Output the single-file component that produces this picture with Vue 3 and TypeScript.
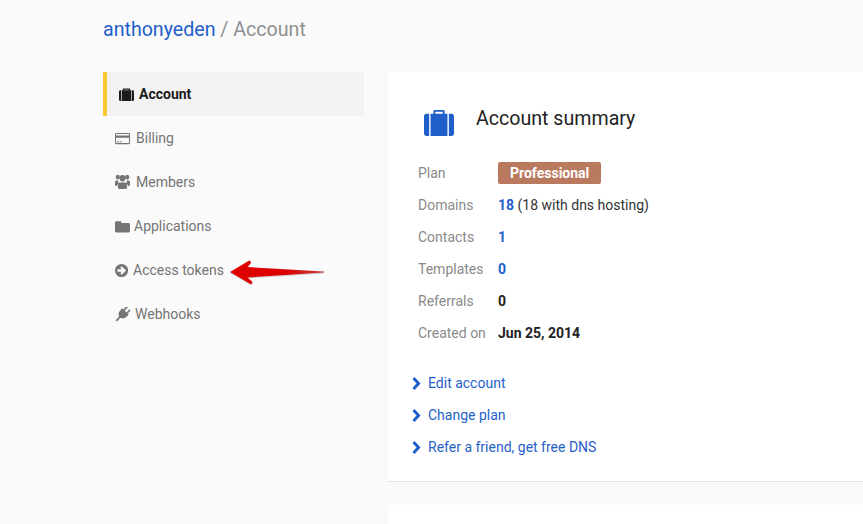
<script setup lang="ts">
interface NavItem { label: string; icon: string; gap: number; active?: boolean }
const nav: NavItem[] = [
  { label: 'Account', icon: 'case', gap: 5, active: true },
  { label: 'Billing', icon: 'card', gap: 6 },
  { label: 'Members', icon: 'users', gap: 6 },
  { label: 'Applications', icon: 'folder', gap: 4 },
  { label: 'Access tokens', icon: 'circle', gap: 3 },
  { label: 'Webhooks', icon: 'plug', gap: 5 },
]
const links = ['Edit account', 'Change plan', 'Refer a friend, get free DNS']
</script>

<template>
  <div class="page">
    <h1 class="crumb"><a class="blue">anthonyeden</a> / Account</h1>
    <div class="columns">
      <nav class="side">
        <a v-for="item in nav" :key="item.label" class="nav" :class="{ active: item.active }">
          <svg class="ico" viewBox="0 0 16 16" fill="currentColor">
            <template v-if="item.icon === 'case'">
              <path d="M5 1.500h6a1 1 0 0 1 1 1V4h-1.500V3H5.500v1H4V2.500a1 1 0 0 1 1-1z" />
              <path d="M3.200 3.500h9.600V15H3.200zM0 5a1.500 1.500 0 0 1 1.500-1.500h1V15h-1A1.500 1.500 0 0 1 0 13.500zM13.500 3.500h1A1.500 1.500 0 0 1 16 5v8.500a1.500 1.500 0 0 1-1.500 1.500h-1z" />
            </template>
            <path v-else-if="item.icon === 'card'" fill-rule="evenodd" d="M1.200 2h13.600A1.200 1.200 0 0 1 16 3.200v9.600a1.200 1.200 0 0 1-1.200 1.200H1.200A1.200 1.200 0 0 1 0 12.800V3.200A1.200 1.200 0 0 1 1.200 2zM1.100 3.100v1.700h13.800V3.100zm0 4v5.800h13.800V7.100zM2.200 11h2.200v.9H2.200zm3.300 0h1.700v.9H5.500z" />
            <g v-else-if="item.icon === 'users'" transform="translate(0 -1.500) scale(1 1.150)">
              <circle cx="3" cy="3.300" r="2.200" /><circle cx="13" cy="3.300" r="2.200" /><circle cx="8" cy="4.300" r="3" />
              <path d="M0 7.800C0 7 .6 6.300 1.500 6.300h2c-.3 1-.1 2 .5 2.800-1 .4-1.700 1.100-2 2.500C.8 11.600 0 11 0 10zM16 7.800c0-.8-.6-1.500-1.500-1.500h-2c.3 1 .1 2-.5 2.800 1 .4 1.700 1.100 2 2.500 1.200 0 2-.6 2-1.600zM5.500 8.300h5C12.300 8.300 13 10 13 12c0 1.500-.9 2.400-2 2.400H5c-1.100 0-2-.9-2-2.400 0-2 .7-3.700 2.500-3.700z" />
            </g>
            <path v-else-if="item.icon === 'folder'" d="M1.500 2.500h4c.8 0 1.300.5 1.300 1.300v.4h7.700c.9 0 1.500.6 1.500 1.500v7.100c0 .9-.6 1.500-1.500 1.500h-13C.6 14.300 0 13.700 0 12.800V4C0 3.100.6 2.500 1.500 2.500z" />
            <path v-else-if="item.icon === 'circle'" fill-rule="evenodd" d="M7 1a7 7 0 1 1 0 14A7 7 0 0 1 7 1zM7.200 3.400 5.600 5 7.200 6.700H2.600v2.600h4.600L5.600 11 7.200 12.600 11.800 8z" />
            <g v-else transform="rotate(45 8 8)">
              <path d="M4.800-1.500h1.900v5H4.800zM9.300-1.500h1.900v5H9.300zM3.200 3.500h9.600v3.200c0 2.800-1.800 4.800-3.800 5.300V17.500H7V12c-2-.5-3.800-2.500-3.800-5.300z" />
            </g>
          </svg>
          <span :style="{ marginLeft: item.gap + 'px' }">{{ item.label }}</span>
        </a>
      </nav>
      <main class="main">
        <section class="card">
          <header class="head">
            <svg class="big" viewBox="0 0 32 28" preserveAspectRatio="none" fill="#1f5fc9">
              <path d="M10 1.500C10 .7 10.700 0 11.500 0h9c.8 0 1.500.7 1.500 1.500V5h-2V2h-8v3h-2z" />
              <path d="M7 4h18v24H7zM0 7a3 3 0 0 1 3-3h2.500v24H3a3 3 0 0 1-3-3zM26.500 4H29a3 3 0 0 1 3 3v18a3 3 0 0 1-3 3h-2.500z" />
            </svg>
            <h2>Account summary</h2>
          </header>
          <dl class="facts">
            <dt>Plan</dt><dd><span class="badge">Professional</span></dd>
            <dt>Domains</dt><dd><b class="blue">18</b> (18 with dns hosting)</dd>
            <dt>Contacts</dt><dd><b class="blue">1</b></dd>
            <dt>Templates</dt><dd><b class="blue">0</b></dd>
            <dt>Referrals</dt><dd><b>0</b></dd>
            <dt>Created on</dt><dd><b>Jun 25, 2014</b></dd>
          </dl>
          <ul class="links">
            <li v-for="l in links" :key="l">
              <svg class="chev" viewBox="0 0 9 13" fill="none" stroke="#1f5fc9" stroke-width="3"><path d="M1.500 1l5 5.500-5 5.500" /></svg>
              <a class="blue">{{ l }}</a>
            </li>
          </ul>
        </section>
        <section class="card second"></section>
      </main>
    </div>
    <svg class="arrow" width="100" height="30" viewBox="0 0 100 30">
      <defs>
        <linearGradient id="arrowFill" x1="0" x2="1" y1="0" y2="0">
          <stop offset="0" stop-color="#e00000" />
          <stop offset="0.6" stop-color="#dc0000" />
          <stop offset="1" stop-color="#c84040" />
        </linearGradient>
      </defs>
      <path d="M5 14 23.500 3c1.500-.9 3 .5 2.300 2L22.500 9 99 13.500 99 14.500 22.500 19.500 27 23.500c1.300 1.500-.3 3-2 2.300z" fill="#777" opacity=".35" transform="translate(0 1)" />
      <path d="M5 14 23.500 3c1.500-.9 3 .5 2.300 2L22.500 9 99 13.500 99 14.500 22.500 19.500 27 23.500c1.300 1.500-.3 3-2 2.300z" fill="url(#arrowFill)" />
    </svg>
  </div>
</template>

<style>
html, body { margin: 0; background: #fafafa; }
</style>

<style scoped>
.page {
  position: relative;
  box-sizing: border-box;
  height: 524px;
  overflow: hidden;
  padding-left: 103px;
  background: #fafafa;
  font-family: Roboto, "Liberation Sans", sans-serif;
  font-size: 14px;
  color: #222;
}
.blue { color: #1f5fc9; }
.crumb {
  margin: 0;
  height: 72px;
  padding-top: 17px;
  box-sizing: border-box;
  font-size: 19.6px;
  line-height: 26px;
  font-weight: 400;
  color: #8f8f8f;
}
.columns { display: flex; gap: 24px; }
.side { width: 261px; flex: none; }
.nav {
  display: flex;
  align-items: center;
  height: 44px;
  padding-left: 12px;
  color: #757575;
}
.nav.active {
  background: #f2f2f2;
  border-left: 4px solid #fcc734;
  padding-left: 12px;
  color: #1b1b1b;
  font-weight: 700;
}
.ico { width: 15px; height: 15px; flex: none; }
.main { flex: 1; min-width: 0; }
.card { background: #fff; }
.card:first-child {
  box-sizing: border-box;
  height: 410px;
  padding: 30px 30px 0;
  border-bottom: 1px solid #e4e4e4;
}
.second { margin-top: 23px; height: 40px; }
.head { display: flex; align-items: flex-start; height: 55px; }
.big { width: 30px; height: 26px; margin: 8px 0 0 6px; }
.head h2 { margin: 1px 0 0 22px; font-size: 19.6px; line-height: 32px; font-weight: 400; color: #222; }
.facts {
  display: grid;
  grid-template-columns: 80px 1fr;
  grid-auto-rows: 32px;
  margin: 0;
  align-items: center;
}
.facts dt { color: #8a8a8a; }
.facts dd { margin: 0; color: #333; }
.facts b { color: #222; }
.facts b.blue { color: #1f5fc9; }
.badge {
  display: inline-block;
  padding: 0 12px;
  height: 22px;
  line-height: 22px;
  border-radius: 2px;
  background: #b97a60;
  color: #fff;
  font-weight: 700;
}
.links { list-style: none; margin: 18px 0 0 -6px; padding: 0; }
.links li { display: flex; align-items: center; height: 32px; }
.chev { width: 9px; height: 13px; margin-right: 7px; }
.arrow { position: absolute; left: 225px; top: 258px; }
</style>
